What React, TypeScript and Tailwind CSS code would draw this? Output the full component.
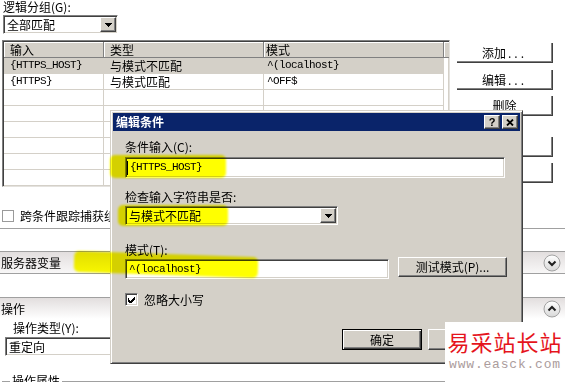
import React from "react";

const sunken =
  "border border-t-[#808080] border-l-[#808080] border-r-white border-b-white shadow-[inset_1px_1px_0_#404040,inset_-1px_-1px_0_#d4d0c8]";
const raised =
  "border border-t-white border-l-white border-r-[#404040] border-b-[#404040] shadow-[inset_-1px_-1px_0_#808080] bg-[#d4d0c8]";
const mono = "font-['Liberation_Mono',monospace] text-[11px] tracking-[-0.6px]";

function DropBtn() {
  return (
    <div className={`${raised} w-[16px] h-[15px] flex items-center justify-center shrink-0`}>
      <svg width="7" height="4" viewBox="0 0 7 4" shapeRendering="crispEdges">
        <polygon points="0,0 7,0 3.5,4" fill="#000" />
      </svg>
    </div>
  );
}

function Chevron({ up }: { up?: boolean }) {
  return (
    <svg width="18" height="18" viewBox="0 0 18 18">
      <defs>
        <linearGradient id={up ? "cgu" : "cgd"} x1="0" y1="0" x2="0" y2="1">
          <stop offset="0" stopColor="#ffffff" />
          <stop offset="1" stopColor="#d8d8d8" />
        </linearGradient>
      </defs>
      <circle cx="9" cy="9" r="8" fill={`url(#${up ? "cgu" : "cgd"})`} stroke="#a2a2a2" />
      <path
        d={up ? "M5.5 10.5 L9 7 L12.5 10.5" : "M5.5 7.5 L9 11 L12.5 7.5"}
        fill="none"
        stroke="#202020"
        strokeWidth="2"
      />
    </svg>
  );
}

function MainBtn({ children, mt }: { children?: React.ReactNode; mt: string }) {
  return (
    <div
      className={`${mt} w-[96px] h-[20px] bg-white border-r border-b border-[#404040] shadow-[inset_-1px_-1px_0_#808080] flex items-center justify-center leading-none`}
    >
      {children}
    </div>
  );
}

function Table() {
  const rows = [
    { a: "{HTTPS_HOST}", b: "与模式不匹配", c: "^(localhost}", sel: true },
    { a: "{HTTPS}", b: "与模式匹配", c: "^OFF$", sel: false },
  ];
  const empty = [0, 1, 2, 3, 4, 5];
  return (
    <div className="ml-[2px] w-[448px] h-[147px] overflow-hidden border border-t-[#808080] border-l-[#808080] border-r-[#e4e2de] border-b-[#e4e2de] shadow-[inset_1px_1px_0_#404040] pl-[1px] pt-[1px] bg-white">
      <div className="flex h-[16px] bg-[#d4d0c8]">
        <div className="w-[100px] border-r border-b border-[#808080] shadow-[inset_1px_1px_0_#fff] pl-[6px] leading-[15px]">输入</div>
        <div className="w-[160px] border-r border-b border-[#808080] shadow-[inset_1px_1px_0_#fff] pl-[6px] leading-[15px]">类型</div>
        <div className="w-[180px] border-r border-b border-[#808080] shadow-[inset_1px_1px_0_#fff] pl-[2px] leading-[15px]">模式</div>
        <div className="flex-1 border-b border-[#808080] shadow-[inset_1px_1px_0_#fff]" />
      </div>
      {rows.map((r) => (
        <div key={r.a} className="flex h-[16px]">
          <div className={`flex w-[440px] border-b border-[#d4d0c8] ${r.sel ? "bg-[#d4d0c8]" : ""}`}>
            <div className={`w-[100px] border-r border-[#d4d0c8] pl-[6px] leading-[15px] ${mono}`}>{r.a}</div>
            <div className="w-[160px] border-r border-[#d4d0c8] pl-[6px] leading-[15px]">{r.b}</div>
            <div className={`w-[180px] border-r border-[#d4d0c8] pl-[3px] leading-[15px] ${mono}`}>{r.c}</div>
          </div>
          <div className="flex-1 border-r border-[#d4d0c8]" />
        </div>
      ))}
      {empty.map((i) => (
        <div key={i} className="flex h-[16px]">
          <div className="flex w-[440px] border-b border-[#d4d0c8]">
            <div className="w-[100px] border-r border-[#d4d0c8]" />
            <div className="w-[160px] border-r border-[#d4d0c8]" />
            <div className="w-[180px] border-r border-[#d4d0c8]" />
          </div>
          <div className="flex-1 border-r border-[#d4d0c8]" />
        </div>
      ))}
    </div>
  );
}

function Dialog() {
  return (
    <div className="absolute left-[110px] top-[110px] w-[413px] h-[254px] bg-[#d4d0c8] border border-t-[#d4d0c8] border-l-[#d4d0c8] border-r-[#404040] border-b-[#404040] shadow-[inset_1px_1px_0_#fff,inset_-1px_-1px_0_#808080] p-[2px] flex flex-col">
      <div className="h-[18px] bg-[#0a246a] flex items-center justify-between pl-[3px] pr-[2px] shrink-0">
        <span className="text-white font-bold leading-none">编辑条件</span>
        <div className="flex gap-[2px]">
          <div className={`${raised} w-[16px] h-[14px] flex items-center justify-center text-[11px] font-bold leading-none font-['Liberation_Sans',sans-serif]`}>?</div>
          <div className={`${raised} w-[16px] h-[14px] flex items-center justify-center`}>
            <svg width="8" height="7" viewBox="0 0 8 7">
              <path d="M1 0.5 L7 6.5 M7 0.5 L1 6.5" stroke="#000" strokeWidth="1.8" />
            </svg>
          </div>
        </div>
      </div>
      <div className="flex flex-col pl-[12px] pr-[12px]">
        <div className="mt-[9px] h-[14px] leading-[14px]">条件输入(C):</div>
        <div className={`mt-[3px] h-[21px] w-[380px] bg-white ${sunken} flex items-center pl-[1px]`}>
          <div className="w-[1px] h-[14px] bg-black" />
          <span className={`ml-[2px] ${mono}`}>{"{HTTPS_HOST}"}</span>
        </div>
        <div className="mt-[12px] h-[14px] leading-[14px]">检查输入字符串是否:</div>
        <div className={`mt-[2px] h-[19px] w-[213px] bg-white ${sunken} flex items-center justify-between pl-[3px] pr-[1px]`}>
          <span className="leading-none">与模式不匹配</span>
          <DropBtn />
        </div>
        <div className="mt-[18px] h-[14px] leading-[14px]">模式(T):</div>
        <div className="flex h-[22px] items-start">
          <div className={`mt-[2px] h-[20px] w-[264px] bg-white ${sunken} flex items-center pl-[3px]`}>
            <span className={mono}>{"^(localhost}"}</span>
          </div>
          <div className={`ml-[9px] w-[109px] h-[20px] ${raised} flex items-center justify-center leading-none`}>
            测试模式(P)...
          </div>
        </div>
        <div className="mt-[14px] h-[13px] flex items-center">
          <div className={`w-[13px] h-[13px] bg-white ${sunken} flex items-center justify-center`}>
            <svg width="7" height="7" viewBox="0 0 7 7" shapeRendering="crispEdges">
              <path d="M0 2h1v2h1v1h1v-1h1v-1h1v-1h1v-1h1v3h-1v1h-1v1h-1v1h-1v1h-1v-1h-1v-1h-1z" fill="#000" />
            </svg>
          </div>
          <span className="ml-[6px] leading-none">忽略大小写</span>
        </div>
        <div className="mt-[23px] flex justify-end gap-[6px]">
          <div className="w-[80px] h-[21px] bg-[#d4d0c8] border border-black shadow-[inset_1px_1px_0_#fff,inset_-1px_-1px_0_#404040,inset_-2px_-2px_0_#808080] flex items-center justify-center leading-none">
            确定
          </div>
          <div className={`w-[80px] h-[21px] ${raised}`} />
        </div>
      </div>
    </div>
  );
}

export default function App() {
  return (
    <div className="relative isolate w-[565px] h-[382px] overflow-hidden bg-white text-[12px] text-black font-['Noto_Sans_CJK_SC',sans-serif]">
      <div className="pl-[3px] h-[14px] leading-[14px]">逻辑分组(G):</div>
      <div className={`ml-[3px] mt-[1px] w-[115px] h-[19px] bg-white ${sunken} flex items-center justify-between pl-[3px] pr-[1px]`}>
        <span className="leading-none">全部匹配</span>
        <DropBtn />
      </div>
      <div className="flex items-start mt-[6px]">
        <Table />
        <div className="ml-[7px] flex flex-col">
          <MainBtn mt="mt-[3px]">
            添加<span className="tracking-[3px] ml-[2px]">...</span>
          </MainBtn>
          <MainBtn mt="mt-[7px]">
            编辑<span className="tracking-[3px] ml-[2px]">...</span>
          </MainBtn>
          <MainBtn mt="mt-[6px]">删除</MainBtn>
          <MainBtn mt="mt-[21px]" />
          <MainBtn mt="mt-[6px]" />
        </div>
      </div>
      <div className="mt-[23px] h-[12px] flex items-center pl-[2px]">
        <div className="w-[12px] h-[12px] border border-[#9a9a9a] bg-white" />
        <span className="ml-[6px] leading-none">跨条件跟踪捕获组</span>
      </div>
      <div className="mt-[6px] border-t border-[#a0a0a0]" />
      <div className="mt-[22px] h-[23px] border-t border-b border-[#a0a0a0] bg-linear-to-b from-[#e2dede] to-[#f8f7f7] flex items-center justify-between pl-[1px] pr-[4px]">
        <span className="leading-none">服务器变量</span>
        <Chevron />
      </div>
      <div className="mt-[23px] h-[22px] border-t border-[#a0a0a0] bg-linear-to-b from-[#e2dede] to-white flex items-center justify-between pl-[1px] pr-[4px]">
        <span className="leading-none">操作</span>
        <Chevron up />
      </div>
      <div className="mt-[2px] pl-[13px] h-[14px] leading-[14px]">操作类型(Y):</div>
      <div className={`ml-[5px] mt-[2px] w-[130px] h-[19px] bg-white ${sunken} flex items-center pl-[3px]`}>
        <span className="leading-none">重定向</span>
      </div>
      <div className="mt-[19px] h-[12px] flex items-center pl-[2px]">
        <div className="w-[8px] border-t border-[#a0a0a0]" />
        <span className="px-[2px] leading-none">操作属性</span>
        <div className="flex-1 border-t border-[#a0a0a0]" />
      </div>

      <Dialog />

      <div className="absolute left-[110px] top-[155px] w-[116px] h-[23px] rounded-[5px] bg-[#ffff00] mix-blend-multiply blur-[1px]" />
      <div className="absolute left-[118px] top-[205px] w-[110px] h-[21px] rounded-[5px] bg-[#ffff00] mix-blend-multiply blur-[1px]" />
      <div className="absolute left-[74px] top-[254px] w-[184px] h-[21px] rotate-[2deg] rounded-[5px] bg-[#ffff00] mix-blend-multiply blur-[1px]" />

      <div className="absolute left-[445px] top-[322px] w-[120px] h-[60px] bg-white flex flex-col items-center">
        <div className="mt-[6px] text-[22px] leading-[26px] tracking-[1px] text-[#e5141c]">易采站长站</div>
        <div className="mt-[4px] font-['Liberation_Mono',monospace] text-[13px] leading-[14px] tracking-[0.8px] text-[#ab9c9c]">
          www.easck.com
        </div>
      </div>
    </div>
  );
}
